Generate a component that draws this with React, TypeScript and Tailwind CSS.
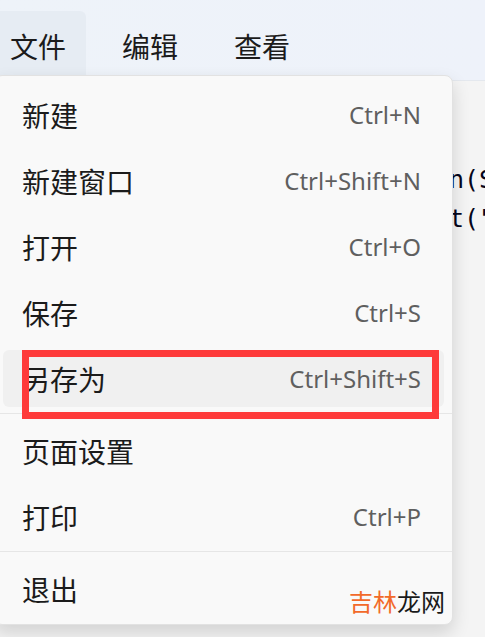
import React from "react";

const cjk = { fontFamily: '"Noto Sans CJK SC", "Noto Sans", sans-serif' };
const latin = { fontFamily: '"Noto Sans", "Open Sans", sans-serif' };

type Item = { label: string; shortcut?: string; active?: boolean };

const groups: Item[][] = [
  [
    { label: "新建", shortcut: "Ctrl+N" },
    { label: "新建窗口", shortcut: "Ctrl+Shift+N" },
    { label: "打开", shortcut: "Ctrl+O" },
    { label: "保存", shortcut: "Ctrl+S" },
    { label: "另存为", shortcut: "Ctrl+Shift+S", active: true },
  ],
  [
    { label: "页面设置" },
    { label: "打印", shortcut: "Ctrl+P" },
  ],
  [{ label: "退出" }],
];

function Row({ item }: { item: Item }) {
  return (
    <div className="h-[66px] pt-[3px]">
      <div
        className={
          "h-[57px] mx-[8px] rounded-[6px] flex items-center justify-between pl-[19px] pr-[23px] " +
          (item.active ? "bg-[#f0f0f0]" : "")
        }
      >
        <span className="text-[28px] leading-[34px] text-[#1b1b1b]" style={cjk}>
          {item.label}
        </span>
        {item.shortcut && (
          <span className="text-[24px] leading-[30px] text-[#5f5f5f]" style={latin}>
            {item.shortcut}
          </span>
        )}
      </div>
    </div>
  );
}

export default function App() {
  return (
    <div className="relative w-[485px] h-[637px] overflow-hidden bg-[#f4f4f4]">
      {/* top menu bar */}
      <div className="h-[81px] bg-gradient-to-r from-[#eef3f9] to-[#eef2fa] border-b border-[#e4e8ee] flex items-start pt-[11px]">
        <div className="flex -ml-[10px] gap-[16px]">
          {["文件", "编辑", "查看"].map((t, i) => (
            <div
              key={t}
              className={
                "h-[70px] px-[20px] flex items-center rounded-[6px] " +
                (i === 0 ? "bg-[#e6ecf3]" : "")
              }
            >
              <span className="text-[28px] leading-[34px] text-[#1b1b1b]" style={cjk}>
                {t}
              </span>
            </div>
          ))}
        </div>
      </div>

      {/* editor content peeking on the right */}
      <div className="w-[485px] overflow-hidden">
        <div
          className="pt-[79px] pl-[449px] w-[600px] text-[25px] leading-[39px] text-[#05051a] whitespace-pre"
          style={{ fontFamily: '"DejaVu Sans Mono", "Liberation Mono", monospace' }}
        >
          <div>n(S</div>
          <div>t("</div>
        </div>
      </div>

      {/* dropdown menu */}
      <div className="absolute left-[-6px] top-[75px] w-[459px] rounded-[8px] border border-[#e2e2e2] bg-[#f9f9f9] shadow-[0_8px_18px_rgba(0,0,0,0.14)] pt-[7px] pb-[1px]">
        {groups.map((g, gi) => (
          <div key={gi}>
            {gi > 0 && <div className="h-px bg-[#e6e6e6] mb-[5px]" />}
            {g.map((it) => (
              <Row key={it.label} item={it} />
            ))}
          </div>
        ))}
      </div>

      {/* red annotation box */}
      <div className="absolute left-[22px] top-[350px] w-[417px] h-[69px] border-[7px] border-[#fe3a3a]" />

      {/* watermark */}
      <div className="absolute left-[349px] top-[587px] text-[24px] leading-[28px]" style={cjk}>
        <span className="text-[#f26a2a]">吉林</span>
        <span className="text-[#1a1a1a]">龙网</span>
      </div>
    </div>
  );
}
